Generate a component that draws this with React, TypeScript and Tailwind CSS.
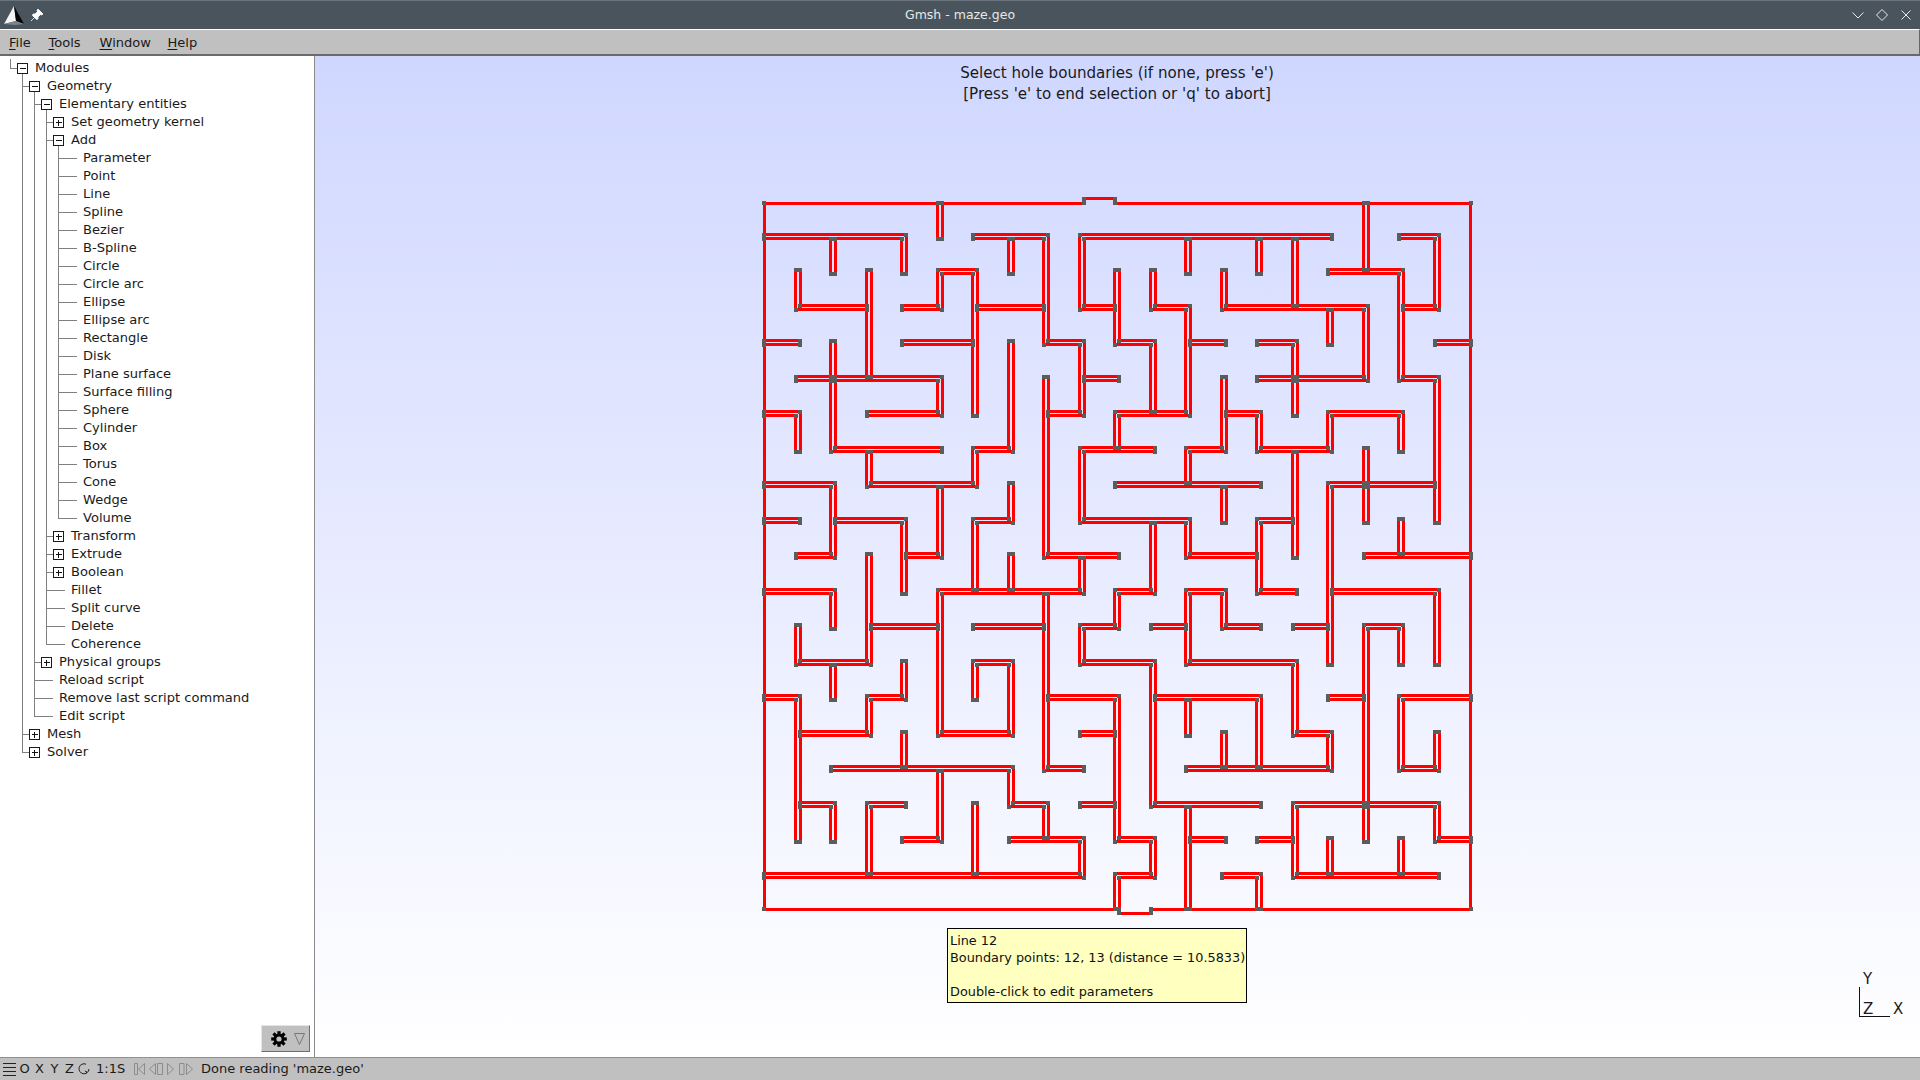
import React from "react";

type Row = { d: number; t: string; k: "p" | "m" | "l"; last?: boolean };
const rows: Row[] = [
  { d: 0, t: "Modules", k: "m", last: true },
  { d: 1, t: "Geometry", k: "m" },
  { d: 2, t: "Elementary entities", k: "m" },
  { d: 3, t: "Set geometry kernel", k: "p" },
  { d: 3, t: "Add", k: "m" },
  ...["Parameter","Point","Line","Spline","Bezier","B-Spline","Circle","Circle arc","Ellipse","Ellipse arc","Rectangle","Disk","Plane surface","Surface filling","Sphere","Cylinder","Box","Torus","Cone","Wedge"].map((t) => ({ d: 4, t, k: "l" as const })),
  { d: 4, t: "Volume", k: "l", last: true },
  { d: 3, t: "Transform", k: "p" },
  { d: 3, t: "Extrude", k: "p" },
  { d: 3, t: "Boolean", k: "p" },
  { d: 3, t: "Fillet", k: "l" },
  { d: 3, t: "Split curve", k: "l" },
  { d: 3, t: "Delete", k: "l" },
  { d: 3, t: "Coherence", k: "l", last: true },
  { d: 2, t: "Physical groups", k: "p" },
  { d: 2, t: "Reload script", k: "l" },
  { d: 2, t: "Remove last script command", k: "l" },
  { d: 2, t: "Edit script", k: "l", last: true },
  { d: 1, t: "Mesh", k: "p" },
  { d: 1, t: "Solver", k: "p", last: true },
];

function TreeRow({ row, index }: { row: Row; index: number }) {
  const { d, k, last } = row;
  const w = 35 + 12 * d;
  const verts: number[] = [];
  for (let a = 1; a < d; a++) {
    let cont = false;
    for (let n = index + 1; n < rows.length; n++) {
      if (rows[n].d < a) break;
      if (rows[n].d === a) { cont = true; break; }
    }
    if (cont) verts.push(a);
  }
  const x = 10.5 + 12 * d;
  const cx = 22.5 + 12 * d;
  return (
    <div className="flex h-[18px] items-center">
      <svg width={w} height={18} className="shrink-0" shapeRendering="crispEdges">
        {verts.map((a) => (
          <line key={a} x1={10.5 + 12 * a} x2={10.5 + 12 * a} y1={0} y2={18} stroke="#808080" />
        ))}
        <line x1={x} x2={x} y1={0} y2={last ? 9.5 : 18} stroke="#808080" />
        <line x1={x} x2={k === "l" ? x + 18 : cx - 5} y1={9.5} y2={9.5} stroke="#808080" />
        {k !== "l" && (
          <>
            <rect x={cx - 5} y={4.5} width={10} height={10} fill="#fff" stroke="#1a1a1a" />
            <line x1={cx - 2.5} x2={cx + 3} y1={9.5} y2={9.5} stroke="#111" />
            {k === "p" && <line x1={cx + 0} x2={cx + 0} y1={7} y2={12.5} stroke="#111" />}
          </>
        )}
        {k === "m" && <line x1={cx} x2={cx} y1={14.5} y2={18} stroke="#808080" />}
      </svg>
      <span className="whitespace-nowrap">{row.t}</span>
    </div>
  );
}

const H: [number, number, number][] = [
  [1,0,4],[1,6,8],[1,9,16],[1,18,19],
  [2,5,6],[2,16,18],
  [3,1,3],[3,4,5],[3,6,8],[3,9,10],[3,11,12],[3,13,17],[3,18,19],
  [4,0,1],[4,4,6],[4,8,9],[4,10,11],[4,12,13],[4,14,15],[4,19,20],
  [5,1,5],[5,9,10],[5,14,17],[5,18,19],
  [6,0,1],[6,3,5],[6,8,9],[6,10,12],[6,13,14],[6,16,18],
  [7,2,5],[7,6,7],[7,9,11],[7,12,13],[7,14,16],
  [8,0,2],[8,3,6],[8,10,14],[8,16,19],
  [9,0,1],[9,2,4],[9,6,7],[9,9,12],[9,14,15],
  [10,1,2],[10,4,5],[10,8,10],[10,12,14],[10,17,20],
  [11,0,2],[11,5,9],[11,10,11],[11,12,13],[11,14,15],[11,16,19],
  [12,3,5],[12,6,8],[12,9,10],[12,11,12],[12,13,14],[12,15,16],[12,17,18],
  [13,1,3],[13,6,7],[13,9,11],[13,12,15],
  [14,0,1],[14,3,4],[14,8,10],[14,11,14],[14,16,17],[14,18,20],
  [15,1,3],[15,5,7],[15,9,10],[15,15,16],
  [16,2,7],[16,8,9],[16,12,16],[16,18,19],
  [17,1,2],[17,3,4],[17,7,8],[17,9,10],[17,11,14],[17,15,19],
  [18,4,5],[18,7,9],[18,10,11],[18,12,13],[18,14,15],[18,19,20],
  [19,0,9],[19,10,11],[19,13,14],[19,15,19],
];
const V: [number, number, number][] = [
  [1,2,3],[1,6,7],[1,12,13],[1,14,18],
  [2,1,2],[2,4,7],[2,8,10],[2,11,12],[2,13,14],[2,17,18],
  [3,2,5],[3,7,8],[3,10,13],[3,14,15],[3,17,19],
  [4,1,2],[4,9,11],[4,13,14],[4,15,16],
  [5,0,1],[5,2,3],[5,5,6],[5,8,10],[5,11,15],[5,16,18],
  [6,2,6],[6,7,8],[6,9,11],[6,13,14],[6,17,19],
  [7,1,2],[7,4,7],[7,8,9],[7,10,11],[7,13,15],[7,16,17],
  [8,1,4],[8,5,10],[8,11,16],[8,17,18],
  [9,1,3],[9,4,6],[9,7,9],[9,10,11],[9,12,13],[9,18,19],
  [10,2,4],[10,6,7],[10,11,12],[10,14,18],[10,19,20],
  [11,2,3],[11,4,6],[11,9,11],[11,13,17],[11,18,19],
  [12,1,2],[12,3,6],[12,7,8],[12,9,10],[12,11,13],[12,14,15],[12,17,20],
  [13,2,3],[13,5,7],[13,8,9],[13,11,12],[13,15,16],
  [14,1,2],[14,6,7],[14,9,11],[14,14,16],[14,19,20],
  [15,1,3],[15,4,6],[15,7,10],[15,13,15],[15,17,19],
  [16,3,4],[16,6,7],[16,8,13],[16,15,16],[16,18,19],
  [17,0,2],[17,3,5],[17,7,9],[17,12,18],
  [18,2,5],[18,6,7],[18,9,10],[18,12,13],[18,14,16],[18,18,19],
  [19,1,3],[19,5,9],[19,11,13],[19,15,16],[19,17,18],
];

const X = (i: number) => (i === 0 ? 764 : i === 20 ? 1471 : Math.floor(762.5 + 35.5 * i));
const Y = (j: number) => (j === 0 ? 203 : j === 20 ? 909 : Math.round(201.2 + 35.5 * j));

type D = { n?: boolean; e?: boolean; s?: boolean; w?: boolean };
const dirs = new Map<string, D>();
const at = (i: number, j: number) => {
  const k = i + "," + j;
  if (!dirs.has(k)) dirs.set(k, {});
  return dirs.get(k)!;
};
H.forEach(([j, a, b]) => {
  for (let i = a; i < b; i++) { at(i, j).e = true; at(i + 1, j).w = true; }
});
V.forEach(([i, a, b]) => {
  for (let j = a; j < b; j++) { at(i, j).s = true; at(i, j + 1).n = true; }
});

type R = [number, number, number, number];
const red: R[] = [
  [763, 201, 3, 710], [1469, 201, 3, 710],
  [764, 202, 320, 3], [1115, 202, 356, 3],
  [764, 908, 351, 3], [1151, 908, 320, 3],
  [1084, 197, 31, 3], [1120, 912, 31, 3], [1150, 908, 3, 7], [1118, 908, 3, 7],
];
const gap: R[] = [];
const sq: R[] = [
  [762, 201, 4, 4], [1469, 201, 4, 4], [762, 907, 4, 4], [1469, 907, 4, 4],
  [1082, 197, 4, 8], [1113, 197, 4, 8], [1117, 911, 4, 4], [1149, 907, 4, 8],
];

H.forEach(([j, a, b]) => {
  const y = Y(j);
  const l = a === 0 ? X(0) : X(a) - 4;
  const r = b === 20 ? X(20) : X(b) + 4;
  red.push([l, y - 4, r - l, 7]);
  const da = at(a, j), db = at(b, j);
  const gl = a === 0 ? X(0) + 2 : da.w ? X(a) - 1 : da.n && da.s ? X(a) + 4 : da.n || da.s ? X(a) - 1 : X(a) - 4;
  const gr = b === 20 ? X(20) - 2 : db.e ? X(b) + 1 : db.n && db.s ? X(b) - 4 : db.n || db.s ? X(b) + 1 : X(b) + 4;
  gap.push([gl, y - 1, gr - gl, 1]);
  if (a === 0) sq.push([X(0) - 2, y - 4, 4, 8]);
  if (b === 20) sq.push([X(20) - 2, y - 4, 4, 8]);
});
V.forEach(([i, a, b]) => {
  const x = X(i);
  const t = a === 0 ? Y(0) : Y(a) - 4;
  const e = b === 20 ? Y(20) : Y(b) + 3;
  red.push([x - 4, t, 8, e - t]);
  const da = at(i, a), db = at(i, b);
  const gt = a === 0 ? Y(0) + 2 : da.n ? Y(a) - 1 : da.e && da.w ? Y(a) + 3 : da.e || da.w ? Y(a) - 1 : Y(a) - 4;
  const ge = b === 20 ? Y(20) - 2 : db.s ? Y(b) : db.e && db.w ? Y(b) - 4 : db.e || db.w ? Y(b) : Y(b) + 3;
  gap.push([x - 1, gt, 2, ge - gt]);
  if (a === 0) sq.push([x - 4, Y(0) - 2, 8, 4]);
  if (b === 20) sq.push([x - 4, Y(20) - 2, 8, 4]);
});

dirs.forEach((d, key) => {
  const [i, j] = key.split(",").map(Number);
  if (i === 0 || i === 20 || j === 0 || j === 20) return;
  const x = X(i), y = Y(j);
  const q = (qx: number, qy: number) => sq.push([qx < 0 ? x - 4 : x, qy < 0 ? y - 4 : y, 4, 4]);
  const c = [d.n, d.e, d.s, d.w].filter(Boolean).length;
  const hd = d.e ? 1 : -1;
  const vd = d.s ? 1 : -1;
  if (c === 1) {
    if (d.e || d.w) { q(-hd, -1); q(-hd, 1); } else { q(-1, -vd); q(1, -vd); }
  } else if (c === 2) {
    if ((d.e || d.w) && (d.n || d.s)) { q(hd, vd); q(-hd, -vd); }
  } else if (c === 3) {
    if (d.n && d.s) { q(hd, -1); q(hd, 1); } else { q(-1, vd); q(1, vd); }
  } else {
    q(-1, -1); q(1, -1); q(-1, 1); q(1, 1);
  }
});

function Maze() {
  return (
    <svg
      width={730}
      height={780}
      viewBox="760 196 730 780"
      shapeRendering="crispEdges"
      className="absolute left-[445px] top-[140px]"
    >
      <defs>
        <linearGradient id="bgg" gradientUnits="userSpaceOnUse" x1="0" y1="56" x2="0" y2="1057">
          <stop offset="0" stopColor="#d0d7ff" />
          <stop offset="1" stopColor="#ffffff" />
        </linearGradient>
      </defs>
      {red.map((r, i) => (
        <rect key={i} x={r[0]} y={r[1]} width={r[2]} height={r[3]} fill="#ff0000" />
      ))}
      {gap.map((r, i) => (
        <rect key={i} x={r[0]} y={r[1]} width={r[2]} height={r[3]} fill="url(#bgg)" />
      ))}
      {sq.map((r, i) => (
        <rect key={i} x={r[0]} y={r[1]} width={r[2]} height={r[3]} fill="#5c5c5c" />
      ))}
    </svg>
  );
}

function Gear() {
  return (
    <svg width={16} height={16} viewBox="-8 -8 16 16">
      {[0, 45, 90, 135].map((a) => (
        <rect key={a} x={-1.6} y={-7.8} width={3.2} height={15.6} fill="#000" transform={`rotate(${a})`} />
      ))}
      <circle r={5.5} fill="#000" />
      <circle r={2.6} fill="#c0c0c0" />
    </svg>
  );
}

const gs = "#8c8c8c";

export default function App() {
  return (
    <div className="flex h-[1080px] w-[1920px] flex-col overflow-hidden bg-white font-['DejaVu_Sans',sans-serif] text-[13.06px] text-[#1a1a1a]">
      <div className="relative flex h-[29px] shrink-0 items-center border-t border-t-[#6b747d] bg-[#4a545d] pl-[3px]">
        <svg width={22} height={20} viewBox="0 0 22 20">
          <path d="M11 1 L1 19 L13 16 Z" fill="#f4f4f4" />
          <path d="M11 1 L13 16 L21 19 Z" fill="#050505" />
          <path d="M1 19 L13 16 L21 19 L12 20 Z" fill="#7d8388" />
        </svg>
        <svg width={14} height={14} viewBox="0 0 14 14" className="ml-[5px]">
          <path d="M8 1 L13 6 L11.5 7 L10.5 6.5 L8 9 L8 11 L6.5 11.5 L2.5 7.5 L3 6 L5 6 L7.5 3.5 L7 2.5 Z M4.5 9.5 L1 13" fill="#fff" stroke="#fff" strokeWidth={0.8} />
        </svg>
        <span className="absolute left-0 right-0 text-center text-[12.5px] text-[#e6e8ea]">Gmsh - maze.geo</span>
        <div className="ml-auto flex items-center gap-[10px] pr-[7px]">
          <svg width={14} height={14} viewBox="0 0 14 14" fill="none" stroke="#e8eaec" strokeWidth={1}>
            <path d="M1.5 4.5 L7 10 L12.5 4.5" />
          </svg>
          <svg width={14} height={14} viewBox="0 0 14 14" fill="none" stroke="#e8eaec" strokeWidth={1}>
            <path d="M7 1.5 L12.5 7 L7 12.5 L1.5 7 Z" />
          </svg>
          <svg width={14} height={14} viewBox="0 0 14 14" fill="none" stroke="#e8eaec" strokeWidth={1}>
            <path d="M2.5 2.5 L11.5 11.5 M11.5 2.5 L2.5 11.5" />
          </svg>
        </div>
      </div>

      <div className="flex h-[27px] shrink-0 items-center border-t border-b-2 border-t-white border-r border-r-[#666] border-b-[#6a6a6a] bg-[#c0c0c0] pl-[9px] pt-[2px]">
        {[["F","ile",39.5],["T","ools",51],["W","indow",68],["H","elp",60]].map(([a,b,w]) => (
          <span key={a as string} className="whitespace-nowrap" style={{ width: w as number }}>
            <span className="underline underline-offset-2">{a}</span>{b}
          </span>
        ))}
      </div>

      <div className="flex min-h-0 flex-1">
        <div className="flex w-[315px] shrink-0 flex-col justify-between border-r border-r-[#8a8a8a] bg-white pt-[3px]">
          <div>
            {rows.map((r, i) => (
              <TreeRow key={i} row={r} index={i} />
            ))}
          </div>
          <div className="mb-[5px] mr-[4px] flex h-[27px] w-[49px] items-center gap-[7px] self-end border border-t-[#e4e4e4] border-l-[#e4e4e4] border-r-[#6e6e6e] border-b-[#6e6e6e] bg-[#c0c0c0] pl-[9px]">
            <Gear />
            <svg width={11} height={12} viewBox="0 0 11 12" fill="none" stroke="#777" strokeWidth={1}>
              <path d="M0.5 0.5 L10.5 0.5 L5.5 11.5 Z" />
            </svg>
          </div>
        </div>

        <div className="relative min-w-0 flex-1 bg-linear-to-b/srgb from-[#d0d7ff] to-white">
          <div className="pl-[0px] pr-[1px] pt-[7px] text-center text-[15.1px] leading-[21px] text-[#1a1a1a]">
            <div>Select hole boundaries (if none, press 'e')</div>
            <div>[Press 'e' to end selection or 'q' to abort]</div>
          </div>
          <Maze />
          <div className="absolute left-[632px] top-[872px] h-[75px] w-[300px] whitespace-nowrap border border-black bg-[#ffffc0] pl-[2px] pt-[3px] text-[12.85px] leading-[17px] text-[#111]">
            <div>Line 12</div>
            <div>Boundary points: 12, 13 (distance = 10.5833)</div>
            <div className="h-[17px]" />
            <div>Double-click to edit parameters</div>
          </div>
          <svg width={34} height={32} className="absolute left-[1544px] top-[930px]" shapeRendering="crispEdges">
            <line x1={0.5} x2={0.5} y1={1} y2={31} stroke="#111" />
            <line x1={0} x2={31} y1={30.5} y2={30.5} stroke="#111" />
          </svg>
          <span className="absolute left-[1548px] top-[914px] text-[15px] leading-[18px]">Y</span>
          <span className="absolute left-[1548px] top-[944px] text-[15px] leading-[18px]">Z</span>
          <span className="absolute left-[1578px] top-[944px] text-[15px] leading-[18px]">X</span>
        </div>
      </div>

      <div className="flex h-[23px] shrink-0 items-center border-t border-t-[#909090] bg-[#c0c0c0] text-[13px]">
        <svg width={15} height={16} className="ml-[2px] shrink-0" shapeRendering="crispEdges">
          <path d="M1 2.5 H14 M1 6.5 H14 M1 10.5 H14 M1 14.5 H14" stroke="#222" />
        </svg>
        <span className="w-[15px] text-center">O</span>
        <span className="w-[15px] text-center">X</span>
        <span className="w-[15px] text-center">Y</span>
        <span className="w-[15px] text-center">Z</span>
        <svg width={14} height={14} viewBox="0 0 14 14" fill="none" stroke="#222" strokeWidth={1} className="shrink-0">
          <path d="M9 2.2 A5 5 0 1 0 12 7" />
          <path d="M8 12 L10 10 L8 9" />
        </svg>
        <span className="ml-[5px] w-[18px]">1:1</span>
        <span className="ml-[3px] w-[12px]">S</span>
        <svg width={60} height={14} viewBox="0 0 60 14" fill="none" stroke={gs} strokeWidth={1} className="ml-[5px] shrink-0" shapeRendering="geometricPrecision">
          <path d="M0.5 1.5 H3.5 V12.5 H0.5 Z M10.5 1.5 L4.5 7 L10.5 12.5 Z" />
          <path d="M21.5 1.5 L15.5 7 L21.5 12.5 Z M23.5 1.5 H28.5 V12.5 H23.5 Z" />
          <path d="M33.5 1.5 L39.5 7 L33.5 12.5 Z" />
          <path d="M45.5 1.5 H50 V12.5 H45.5 Z M52.5 1.5 L58.5 7 L52.5 12.5 Z" />
        </svg>
        <span className="ml-[7px] whitespace-nowrap">Done reading 'maze.geo'</span>
      </div>
    </div>
  );
}
